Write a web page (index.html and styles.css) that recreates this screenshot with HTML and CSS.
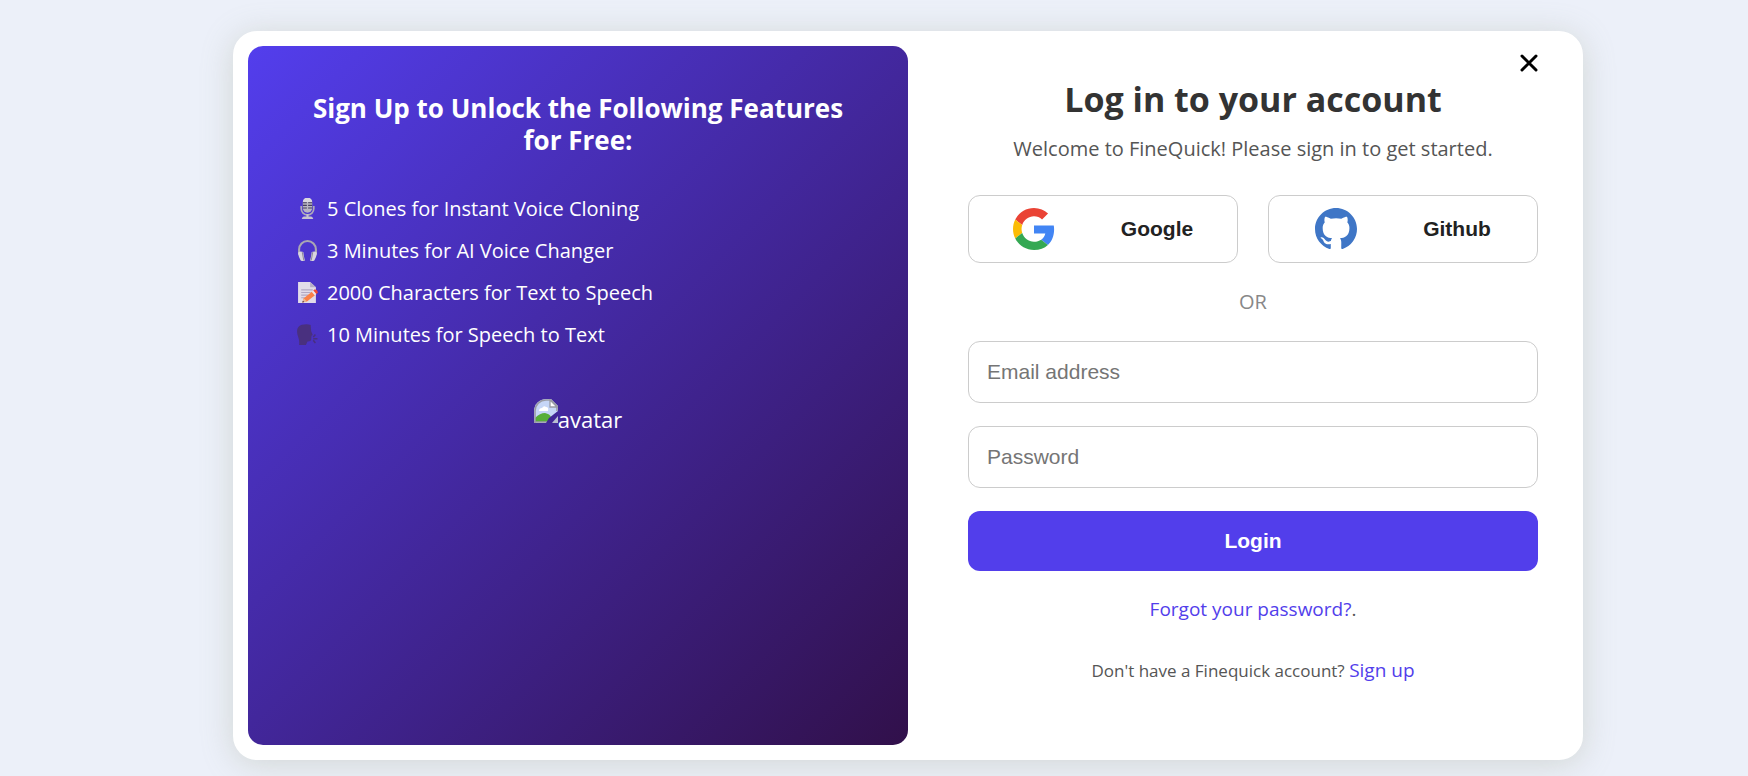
FILE: index.html
```html
<!DOCTYPE html>
<html lang="en">
<head>
<meta charset="utf-8">
<meta name="viewport" content="width=device-width, initial-scale=1">
<title>FineQuick – Log in</title>
<link rel="stylesheet" href="styles.css">
</head>
<body>
<main class="card">
  <section class="promo">
    <h2 class="promo-title">Sign Up to Unlock the Following Features for Free:</h2>
    <ul class="features">
      <li class="feature">
        <svg class="feature-icon" viewBox="0 0 20 20" aria-hidden="true">
          <path d="M4 7.500v2.600a6 6 0 0 0 12 0V7.500" fill="none" stroke="#aeaab9" stroke-width="1.600"/>
          <rect x="5.500" y="0" width="9" height="14" rx="4.500" fill="#b9b6c2"/>
          <path d="M5.500 4a4.500 4.500 0 0 1 9 0z" fill="#d9d6df"/>
          <path d="M5.500 4.500h3.900M10.600 4.500h3.900M5.500 7h3.900M10.600 7h3.900M5.500 9.500h3.900M10.600 9.500h3.900" stroke="#443d5e" stroke-width="1"/>
          <path d="M9 15.500h2v2h2.500q1.500 0 2 2.500h-11q.5-2.500 2-2.500H9z" fill="#c7c3d0"/>
        </svg>
        <span>5 Clones for Instant Voice Cloning</span>
      </li>
      <li class="feature">
        <svg class="feature-icon" viewBox="0 0 20 20" aria-hidden="true">
          <path d="M2 13V9a8 8 0 0 1 16 0v4" fill="none" stroke="#aaa7b3" stroke-width="2"/>
          <path d="M1.500 11.500q2-1 4.500 0 .5 4 1.500 8-2 1-4 0Q1.500 16 1 13zM18.500 11.500q-2-1-4.500 0-.5 4-1.500 8 2 1 4 0 2-3.500 2.500-6.500z" fill="#d8d5de"/>
          <path d="M5 11.500l1.500 8M15 11.500l-1.500 8" stroke="#8d899b" stroke-width="1"/>
        </svg>
        <span>3 Minutes for AI Voice Changer</span>
      </li>
      <li class="feature">
        <svg class="feature-icon" viewBox="0 0 20 20" aria-hidden="true">
          <path d="M1 0h11.500L18 5v15H1z" fill="#e2dce9"/>
          <path d="M12.500 0 18 5h-5.500z" fill="#b6adc5"/>
          <path d="M4 7.500h11M4 10h9M4 12.500h7M4 15h4" stroke="#b2a8c4" stroke-width="1"/>
          <path d="M5 19.500l1.500-4L15 8.500l3 3.500-8.500 6.500z" fill="#fb8148"/>
          <path d="M14 9.300l1.500-1.300 3 3.500-1.500 1.300z" fill="#efe7ef"/>
          <path d="M15.500 8l1.500-1q2.500.5 3 3l-1.500 1.500z" fill="#ee4a37"/>
          <path d="M5 19.500l1.500-4 3 3z" fill="#edba91"/>
          <path d="M5 19.500l.6-1.700 1.400 1.200z" fill="#44334a"/>
        </svg>
        <span>2000 Characters for Text to Speech</span>
      </li>
      <li class="feature">
        <svg class="feature-icon" viewBox="0 0 20 20" aria-hidden="true">
          <path d="M2 20q.5-4-1-8Q-2 3 4.500.8 10-.5 13 1l.5 6 1.500 3.500-1.200.8-.3 4q-.5 1.500-3.500 1.300L8.500 20z" fill="#49307f"/>
          <path d="M15.500 12.500l2-2.500M15.500 14h4M15.500 15.500l2 2.500" stroke="#49307f" stroke-width="1.500"/>
        </svg>
        <span>10 Minutes for Speech to Text</span>
      </li>
    </ul>
    <div class="avatar">
      <svg class="avatar-icon" viewBox="0 0 24 24" aria-hidden="true">
        <path d="M0 24V12A12 12 0 0 1 12 0h5l7 7v7L14 24z" fill="#c6d6f7"/>
        <path d="M5 12q0-3 3-3 2-3 4-1 3 0 2 4z" fill="#fff"/>
        <path d="M1 23v-4q5-5 10-5 5 1 6 4l-4 5z" fill="#57ae38"/>
        <path d="M1 24V12A11 11 0 0 1 12 1h5l6 6v5M0 23h14" fill="none" stroke="#9a9ca5" stroke-width="1.600"/>
        <path d="M16 1v7h7z" fill="#fff" stroke="#9a9ca5" stroke-width="1.300"/>
        <path d="M24 12v4l-7 8h-5l3-5z" fill="#402695"/>
        <path d="M24 17v7h-6z" fill="#b8bfd0"/>
      </svg>
      <span>avatar</span>
    </div>
  </section>

  <section class="login">
    <button class="close" type="button" aria-label="Close">
      <svg class="close-icon" viewBox="0 0 18 18" aria-hidden="true"><path d="M2 2l14 14M16 2L2 16" stroke="#000" stroke-width="3" stroke-linecap="round"/></svg>
    </button>
    <h1 class="login-title">Log in to your account</h1>
    <p class="login-sub">Welcome to FineQuick! Please sign in to get started.</p>
    <div class="providers">
      <button class="provider" type="button">
        <svg class="provider-icon" viewBox="0 0 48 48" aria-hidden="true">
          <path fill="#EA4335" d="M24 9.500c3.540 0 6.710 1.220 9.210 3.600l6.850-6.850C35.900 2.380 30.470 0 24 0 14.620 0 6.510 5.380 2.560 13.220l7.980 6.190C12.430 13.720 17.740 9.500 24 9.500z"/>
          <path fill="#4285F4" d="M46.980 24.550c0-1.570-.15-3.090-.38-4.550H24v9.020h12.940c-.58 2.960-2.260 5.480-4.780 7.180l7.730 6c4.510-4.180 7.090-10.360 7.090-17.650z"/>
          <path fill="#FBBC05" d="M10.530 28.590c-.48-1.450-.76-2.990-.76-4.590s.27-3.140.76-4.590l-7.980-6.190C.92 16.460 0 20.120 0 24c0 3.880.92 7.540 2.560 10.780l7.970-6.190z"/>
          <path fill="#34A853" d="M24 48c6.480 0 11.930-2.130 15.890-5.810l-7.730-6c-2.150 1.450-4.920 2.300-8.160 2.300-6.260 0-11.570-4.220-13.470-9.910l-7.980 6.190C6.510 42.620 14.620 48 24 48z"/>
        </svg>
        <span>Google</span>
      </button>
      <button class="provider" type="button">
        <svg class="provider-icon" viewBox="0 0 16 16" aria-hidden="true">
          <path fill="#3f76c6" d="M8 0C3.580 0 0 3.580 0 8c0 3.540 2.290 6.530 5.470 7.590.4.070.550-.17.550-.38 0-.19-.01-.82-.01-1.490-2.010.37-2.530-.49-2.690-.94-.09-.23-.48-.94-.82-1.130-.28-.15-.68-.52-.01-.53.630-.01 1.080.58 1.230.82.720 1.210 1.870.87 2.330.66.070-.52.280-.87.510-1.070-1.780-.2-3.640-.89-3.640-3.950 0-.87.310-1.590.820-2.150-.08-.2-.36-1.020.080-2.120 0 0 .670-.21 2.200.820.640-.18 1.320-.27 2-.27s1.360.090 2 .27c1.530-1.040 2.200-.82 2.200-.82.440 1.100.160 1.920.080 2.120.510.560.820 1.270.820 2.150 0 3.070-1.870 3.750-3.650 3.950.290.250.540.730.540 1.480 0 1.070-.01 1.930-.01 2.200 0 .210.150.460.550.380A8.010 8.010 0 0 0 16 8c0-4.420-3.580-8-8-8z"/>
        </svg>
        <span>Github</span>
      </button>
    </div>
    <p class="or">OR</p>
    <form class="form">
      <input class="field" type="email" placeholder="Email address" aria-label="Email address">
      <input class="field" type="password" placeholder="Password" aria-label="Password">
      <button class="submit" type="submit">Login</button>
    </form>
    <p class="forgot"><a class="link" href="#forgot">Forgot your password?</a>.</p>
    <p class="signup">Don't have a Finequick account? <a class="link signup-link" href="#signup">Sign up</a></p>
  </section>
</main>
</body>
</html>
```
FILE: styles.css
```css
* {
  box-sizing: border-box;
}

body {
  margin: 0;
  min-height: 100vh;
  padding: 31px 0 16px 68px;
  background: #ecf0f9;
  font-family: "Segoe UI", "Open Sans", "Noto Sans", sans-serif;
  color: #555;
}

h1, h2, p, ul {
  margin: 0;
  padding: 0;
}

.card {
  position: relative;
  display: grid;
  grid-template-columns: 1fr 1fr;
  width: calc(100% - 60px);
  max-width: 1350px;
  margin: 0 auto;
  padding: 15px;
  background: #fff;
  border-radius: 24px;
  box-shadow: 0 4px 32px rgba(150, 155, 130, 0.3);
}

.promo {
  padding: 46px 48px;
  border-radius: 15px;
  background: linear-gradient(135deg, #533eed, #31104a);
  color: #fff;
}

.promo-title {
  font-size: 26px;
  line-height: 32px;
  text-align: center;
}

.features {
  margin-top: 31px;
  list-style: none;
}

.feature {
  display: flex;
  align-items: center;
  gap: 9px;
  height: 42px;
  padding-left: 1px;
  font-size: 20px;
}

.feature-icon {
  width: 21px;
  height: 21px;
}

.avatar {
  display: flex;
  justify-content: center;
  margin-top: 44px;
  font-size: 22px;
  line-height: 40px;
}

.avatar-icon {
  width: 24px;
  height: 24px;
}

.login {
  padding: 30px 30px 59px 60px;
  text-align: center;
}

.close {
  position: absolute;
  top: 15px;
  right: 36px;
  display: flex;
  padding: 8px 9px;
  border: 0;
  background: none;
  cursor: pointer;
}

.close-icon {
  width: 18px;
  height: 18px;
}

.login-title {
  font-size: 34px;
  line-height: 46px;
  color: #333;
}

.login-sub {
  margin-top: 11px;
  font-size: 20px;
  line-height: 32px;
}

.providers {
  display: flex;
  gap: 30px;
  margin-top: 30px;
}

.provider {
  flex: 1;
  display: flex;
  align-items: center;
  justify-content: center;
  gap: 66px;
  height: 68px;
  border: 1px solid #ccc;
  border-radius: 12px;
  background: #fff;
  font: bold 21px "Liberation Sans", Arial, sans-serif;
  color: #222;
  cursor: pointer;
}

.provider-icon {
  width: 42px;
  height: 42px;
}

.or {
  margin-top: 24px;
  font-size: 20px;
  line-height: 30px;
  color: #888;
}

.form {
  display: flex;
  flex-direction: column;
  gap: 23px;
  margin-top: 24px;
}

.field {
  height: 62px;
  padding: 0 18px;
  border: 1px solid #ccc;
  border-radius: 12px;
  background: #fff;
  font: 21px "Liberation Sans", Arial, sans-serif;
  color: #222;
}

.field::placeholder {
  color: #757575;
}

.submit {
  height: 60px;
  border: 0;
  border-radius: 12px;
  background: #523eeb;
  font: bold 21px "Liberation Sans", Arial, sans-serif;
  color: #fff;
  cursor: pointer;
}

.forgot {
  margin-top: 23px;
  font-size: 19px;
  line-height: 30px;
}

.link {
  color: #523eeb;
  text-decoration: none;
}

.signup {
  margin-top: 31px;
  font-size: 17px;
  line-height: 30px;
}

.signup-link {
  font-size: 19px;
}
```
